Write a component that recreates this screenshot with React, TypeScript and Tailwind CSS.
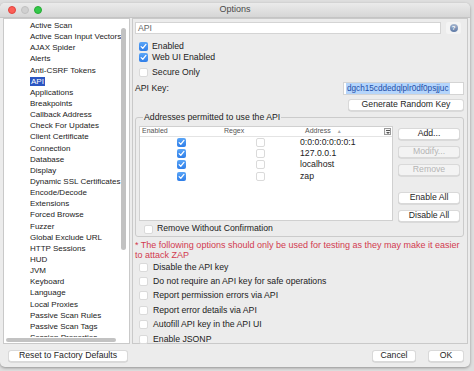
import React from "react";

const tree = [
  "Active Scan",
  "Active Scan Input Vectors",
  "AJAX Spider",
  "Alerts",
  "Anti-CSRF Tokens",
  "API",
  "Applications",
  "Breakpoints",
  "Callback Address",
  "Check For Updates",
  "Client Certificate",
  "Connection",
  "Database",
  "Display",
  "Dynamic SSL Certificates",
  "Encode/Decode",
  "Extensions",
  "Forced Browse",
  "Fuzzer",
  "Global Exclude URL",
  "HTTP Sessions",
  "HUD",
  "JVM",
  "Keyboard",
  "Language",
  "Local Proxies",
  "Passive Scan Rules",
  "Passive Scan Tags",
  "Session Properties",
];

const addresses = ["0:0:0:0:0:0:0:1", "127.0.0.1", "localhost", "zap"];

const testOptions = [
  "Disable the API key",
  "Do not require an API key for safe operations",
  "Report permission errors via API",
  "Report error details via API",
  "Autofill API key in the API UI",
  "Enable JSONP",
];

const Check = ({ on }: { on?: boolean }) => {
  if (on)
    return (
      <div className="w-[9px] h-[9px] rounded-[2px] bg-gradient-to-b from-[#5aa5f7] to-[#2f7ee8] flex items-center justify-center shrink-0">
        <svg width="7" height="7" viewBox="0 0 8 8">
          <path d="M1.3 4.2 L3.2 6 L6.8 1.6" stroke="white" strokeWidth="1.4" fill="none" strokeLinecap="round" strokeLinejoin="round" />
        </svg>
      </div>
    );
  return <div className="w-[9px] h-[9px] rounded-[2px] bg-white border border-[#dadada] shrink-0" />;
};

const Btn = ({ label, w, disabled }: { label: string; w: string; disabled?: boolean }) => (
  <div
    className={`${w} h-[12px] rounded-[3px] border border-[#d9d9d9] flex items-center justify-center shadow-[0_0.5px_0.5px_rgba(0,0,0,0.15)] whitespace-nowrap ${
      disabled ? "bg-[#f3f3f3] text-[#b5b5b5]" : "bg-white text-[#262626]"
    }`}
  >
    {label}
  </div>
);

export default function App() {
  return (
    <div
      className="w-[474px] h-[371px] bg-[#dedede] overflow-hidden pt-[3px] text-[8.7px] text-[#222]"
      style={{ fontFamily: '"Liberation Sans", Arial, sans-serif' }}
    >
      <div className="w-[470px] h-[364px] bg-[#ececec] rounded-[5px] shadow-[0_1px_3px_rgba(0,0,0,0.35)] flex flex-col overflow-hidden">
        {/* title bar */}
        <div className="h-[15px] bg-gradient-to-b from-[#ebebeb] to-[#d6d6d6] border-b border-[#c4c4c4] flex items-center px-[8px]">
          <div className="flex gap-[5px]">
            <div className="w-[8px] h-[8px] rounded-full bg-[#fc5f57] border border-[#e0443e]" />
            <div className="w-[8px] h-[8px] rounded-full bg-[#d0d0d0] border border-[#c0c0c0]" />
            <div className="w-[8px] h-[8px] rounded-full bg-[#34c84a] border border-[#27aa35]" />
          </div>
          <div className="flex-1 text-center text-[9px] text-[#4a4a4a] pr-[34px]">Options</div>
        </div>

        {/* body */}
        <div className="flex gap-[2px] pl-[3px] h-[326px]">
          {/* tree */}
          <div className="w-[127px] bg-white border border-[#c9c9c9] relative overflow-hidden text-[8px]">
            <div className="pl-[26px] pt-[1px]">
              {tree.map((t) => (
                <div key={t} className="h-[11.15px] leading-[11.15px] whitespace-nowrap">
                  {t === "API" ? <span className="bg-[#2c56c2] text-white px-[1px]">{t}</span> : t}
                </div>
              ))}
            </div>
            <div className="absolute right-[3px] top-[9px] w-[5px] h-[222px] rounded-full bg-[#c2c2c2]" />
            <div className="absolute left-0 right-0 bottom-0 h-[6px] bg-white pl-[2px] pt-[1px]">
              <div className="w-[110px] h-[4px] rounded-full bg-[#c2c2c2]" />
            </div>
          </div>

          {/* options panel */}
          <div className="w-[336px] border border-[#c9c9c9] bg-[#ececec] pl-[2px] pr-[3px] flex flex-col">
            <div className="mt-[3px] flex items-center">
              <div className="w-[306px] h-[12px] bg-white border border-[#d4d4d4] text-[#666] pl-[2px] leading-[10px]">
                API
              </div>
              <div className="ml-[5px] w-[15px] h-[12px] rounded-[2px] bg-[#f4f4f4] flex items-center justify-center">
                <div className="w-[8px] h-[8px] rounded-full bg-gradient-to-b from-[#a7b7cf] to-[#5c78a5] text-white text-[6px] leading-[8px] text-center font-bold">
                  ?
                </div>
              </div>
            </div>

            <div className="mt-[7px] ml-[4px] flex flex-col">
              <div className="h-[11px] flex items-center gap-[4px]">
                <Check on />
                <span>Enabled</span>
              </div>
              <div className="h-[11px] flex items-center gap-[4px]">
                <Check on />
                <span>Web UI Enabled</span>
              </div>
              <div className="h-[11px] mt-[4px] flex items-center gap-[4px]">
                <Check />
                <span>Secure Only</span>
              </div>
            </div>

            <div className="mt-[4px] h-[13px] flex items-center justify-between">
              <span>API Key:</span>
              <div className="w-[121px] h-[13px] bg-white border border-[#d4d4d4] flex items-center pl-[2px] overflow-hidden">
                <span className="bg-[#b5d5fb] text-[#1e4fa8] text-[8.2px] leading-[11px] px-[1px] whitespace-nowrap">dgch15cddedqlplr0df0psjjuc</span>
              </div>
            </div>

            <div className="mt-[4px] flex justify-end">
              <Btn label="Generate Random Key" w="w-[116px]" />
            </div>

            <fieldset className="mt-[1px] border border-[#cbcbcb] rounded-[3px] px-[3px] pb-[2px]">
              <legend className="ml-[4px] px-[1px] leading-[11px]">Addresses permitted to use the API</legend>
              <div className="flex mt-[3px]">
                <div className="w-[254px] h-[95px] bg-white border border-[#d0d0d0]">
                  <div className="h-[10px] flex items-center text-[7px] text-[#555] border-b border-[#e4e4e4] relative">
                    <div className="w-[82px] pl-[2px]">Enabled</div>
                    <div className="w-[77px] pl-[2px]">Regex</div>
                    <div className="pl-[6px] flex items-center gap-[6px]">
                      Address <span className="text-[#aaa] text-[5px]">▲</span>
                    </div>
                    <div className="absolute right-[1px] top-[1px] w-[7px] h-[7px] border border-[#9a9a9a] bg-[#f4f4f4] flex flex-col items-center justify-center gap-[1px]">
                      <div className="w-[4px] h-[1px] bg-[#555]" />
                      <div className="w-0 h-0 border-l-[2px] border-r-[2px] border-t-[2px] border-l-transparent border-r-transparent border-t-[#555]" />
                    </div>
                  </div>
                  {addresses.map((a) => (
                    <div key={a} className="h-[11.2px] flex items-center">
                      <div className="w-[82px] flex justify-center">
                        <Check on />
                      </div>
                      <div className="w-[77px] flex justify-center">
                        <Check />
                      </div>
                      <div className="pl-[1px]">{a}</div>
                    </div>
                  ))}
                </div>
                <div className="ml-[5px] mt-[2px] flex flex-col">
                  <Btn label="Add..." w="w-[62px]" />
                  <div className="mt-[6px]">
                    <Btn label="Modify..." w="w-[62px]" disabled />
                  </div>
                  <div className="mt-[6px]">
                    <Btn label="Remove" w="w-[62px]" disabled />
                  </div>
                  <div className="mt-[16px]">
                    <Btn label="Enable All" w="w-[62px]" />
                  </div>
                  <div className="mt-[6px]">
                    <Btn label="Disable All" w="w-[62px]" />
                  </div>
                </div>
              </div>
              <div className="mt-[2px] ml-[5px] h-[10px] flex items-center gap-[4px]">
                <Check />
                <span>Remove Without Confirmation</span>
              </div>
            </fieldset>

            <div className="mt-[3px] text-[#d23a4f] text-[9px] leading-[10px] whitespace-nowrap">
              * The following options should only be used for testing as they may make it easier
              <br />
              to attack ZAP
            </div>
            <div className="ml-[4px] flex flex-col">
              {testOptions.map((o) => (
                <div key={o} className="h-[14.4px] flex items-center gap-[5px]">
                  <Check />
                  <span>{o}</span>
                </div>
              ))}
            </div>
          </div>
        </div>

        {/* bottom bar */}
        <div className="flex-1 flex items-center pl-[8px] pr-[6px]">
          <Btn label="Reset to Factory Defaults" w="w-[120px]" />
          <div className="flex-1" />
          <Btn label="Cancel" w="w-[44px]" />
          <div className="w-[12px]" />
          <Btn label="OK" w="w-[36px]" />
        </div>
      </div>
    </div>
  );
}
